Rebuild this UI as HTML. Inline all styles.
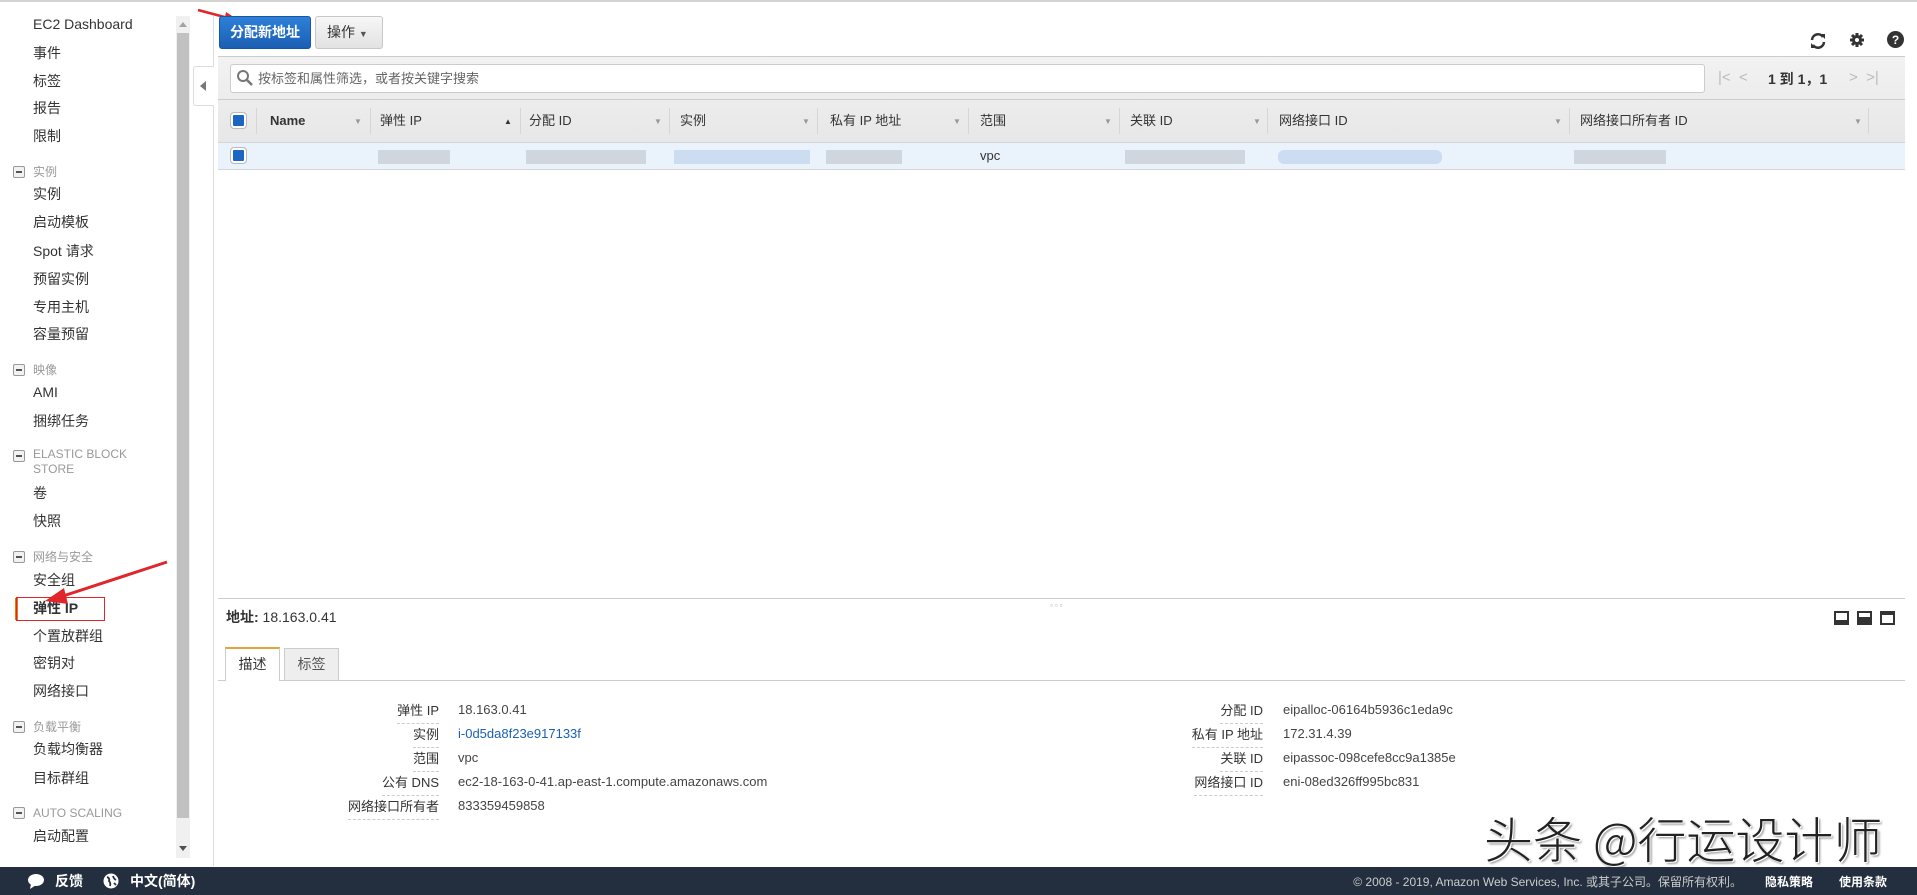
<!DOCTYPE html>
<html><head><meta charset="utf-8">
<style>
*{margin:0;padding:0;box-sizing:border-box}
body{width:1917px;height:895px;position:relative;overflow:hidden;background:#fff;font-family:"Liberation Sans","Noto Sans CJK SC",sans-serif;font-size:14px;color:#333}
.a{position:absolute;white-space:nowrap;line-height:18px}
.nav{left:33px;font-size:14px;color:#333}
.sec{left:33px;font-size:12px;color:#999}
.sec i{position:absolute;left:-20px;top:3px;width:12px;height:12px;border:1px solid #999;border-radius:2px;background:#f2f2f2}
.sec i:after{content:"";position:absolute;left:2px;top:4px;width:6px;height:2px;background:#555}
.hd{font-size:13px;color:#333;top:112px}
.sep{position:absolute;top:108px;width:1px;height:26px;background:#d5d5d5}
.dd{position:absolute;top:117px;font-size:8px;color:#999}
.blur{position:absolute;height:14px;top:150px;background:#c9ced6;opacity:.8}
.lab{font-size:13px;color:#333;text-align:right;border-bottom:1px dashed #ccc;padding-bottom:3px}
.val{font-size:13px;color:#444}
</style></head><body>
<div style="position:absolute;left:0;top:0;width:1917px;height:2px;background:#d4d4d4"></div>
<div class="a nav" style="top:15px">EC2 Dashboard</div>
<div class="a nav" style="top:44px">事件</div>
<div class="a nav" style="top:72px">标签</div>
<div class="a nav" style="top:99px">报告</div>
<div class="a nav" style="top:127px">限制</div>
<div class="a sec" style="top:163px"><i></i>实例</div>
<div class="a nav" style="top:185px">实例</div>
<div class="a nav" style="top:213px">启动模板</div>
<div class="a nav" style="top:242px">Spot 请求</div>
<div class="a nav" style="top:270px">预留实例</div>
<div class="a nav" style="top:298px">专用主机</div>
<div class="a nav" style="top:325px">容量预留</div>
<div class="a sec" style="top:361px"><i></i>映像</div>
<div class="a nav" style="top:383px">AMI</div>
<div class="a nav" style="top:412px">捆绑任务</div>
<div class="a sec" style="top:447px;line-height:15px"><i></i>ELASTIC BLOCK<br>STORE</div>
<div class="a nav" style="top:484px">卷</div>
<div class="a nav" style="top:512px">快照</div>
<div class="a sec" style="top:548px"><i></i>网络与安全</div>
<div class="a nav" style="top:571px">安全组</div>
<div style="position:absolute;left:15px;top:598px;width:3px;height:22px;background:#e47911"></div>
<div class="a nav" style="top:599px;font-weight:bold">弹性 IP</div>
<div style="position:absolute;left:16px;top:597px;width:89px;height:24px;border:1px solid #e0252b"></div>
<div class="a nav" style="top:627px">个置放群组</div>
<div class="a nav" style="top:654px">密钥对</div>
<div class="a nav" style="top:682px">网络接口</div>
<div class="a sec" style="top:718px"><i></i>负载平衡</div>
<div class="a nav" style="top:740px">负载均衡器</div>
<div class="a nav" style="top:769px">目标群组</div>
<div class="a sec" style="top:804px"><i></i>AUTO SCALING</div>
<div class="a nav" style="top:827px">启动配置</div>
<div style="position:absolute;left:176px;top:16px;width:14px;height:842px;background:#f0f0f0"></div>
<div style="position:absolute;left:177px;top:33px;width:12px;height:785px;background:#c1c1c1"></div>
<div style="position:absolute;left:179px;top:22px;border:4px solid transparent;border-bottom:5px solid #a3a3a3;border-top:0"></div>
<div style="position:absolute;left:179px;top:846px;border:4px solid transparent;border-top:5px solid #505050;border-bottom:0"></div>
<div style="position:absolute;left:213px;top:16px;width:1px;height:850px;background:#ddd"></div>
<div style="position:absolute;left:193px;top:66px;width:21px;height:40px;background:#fff;border:1px solid #ddd;border-right:0;border-radius:3px 0 0 3px"></div>
<div style="position:absolute;left:200px;top:81px;border:5px solid transparent;border-right:6px solid #777;border-left:0"></div>
<svg style="position:absolute;left:0;top:0" width="1917" height="895">
<path d="M198 10 L232 19" stroke="#e0252b" stroke-width="2.5"/><path d="M243 23 L226 12 L224 22 Z" fill="#e0252b"/>
<path d="M167 562 L60 597" stroke="#e0252b" stroke-width="3"/><path d="M45 601 L64 588 L68 604 Z" fill="#e0252b"/>
</svg>
<div style="position:absolute;left:219px;top:16px;width:92px;height:33px;background:linear-gradient(#2e80d8,#1a5fb4);border:1px solid #1557a0;border-radius:3px;color:#fff;font-weight:bold;font-size:14px;line-height:31px;text-align:center">分配新地址</div>
<div style="position:absolute;left:315px;top:16px;width:68px;height:33px;background:linear-gradient(#f7f7f7,#e2e2e2);border:1px solid #c8c8c8;border-radius:3px;color:#333;font-size:14px;line-height:31px;padding-left:11px">操作 <span style="font-size:9px;color:#555">&#9660;</span></div>
<svg style="position:absolute;left:1808px;top:31px" width="20" height="20" viewBox="0 0 20 20"><path d="M4 9 A6 6 0 0 1 15 6" stroke="#333" stroke-width="2.5" fill="none"/><path d="M16 11 A6 6 0 0 1 5 14" stroke="#333" stroke-width="2.5" fill="none"/><path d="M12 3 L17 8 L17 3Z M8 17 L3 12 L3 17Z" fill="#333"/></svg>
<svg style="position:absolute;left:1849px;top:32px" width="16" height="16" viewBox="0 0 16 16"><circle cx="8" cy="8" r="5" fill="#333"/><g stroke="#333" stroke-width="3"><path d="M8 1v14M1 8h14M3 3l10 10M13 3L3 13"/></g><circle cx="8" cy="8" r="2" fill="#fff"/></svg>
<svg style="position:absolute;left:1887px;top:31px" width="17" height="17" viewBox="0 0 17 17"><circle cx="8.5" cy="8.5" r="8.5" fill="#333"/><text x="8.5" y="13" text-anchor="middle" font-family="Liberation Sans" font-weight="bold" font-size="12" fill="#fff">?</text></svg>
<div style="position:absolute;left:218px;top:56px;width:1687px;height:86px;background:linear-gradient(#f2f2f2,#e7e7e7);border-top:1px solid #ccc"></div>
<div style="position:absolute;left:230px;top:64px;width:1475px;height:29px;background:#fff;border:1px solid #ccc;border-radius:3px"></div>
<svg style="position:absolute;left:236px;top:69px" width="18" height="18" viewBox="0 0 18 18"><circle cx="7" cy="7" r="5" stroke="#777" stroke-width="2" fill="none"/><path d="M11 11 L16 16" stroke="#777" stroke-width="2.5"/></svg>
<div class="a" style="left:258px;top:70px;font-size:13px;color:#666">按标签和属性筛选，或者按关键字搜索</div>
<div class="a" style="left:1718px;top:69px;font-size:15px;color:#bbb">|&lt; &nbsp;&lt;</div>
<div class="a" style="left:1768px;top:70px;font-size:14px;color:#333;font-weight:bold">1 到 1，1</div>
<div class="a" style="left:1849px;top:69px;font-size:15px;color:#bbb">&gt; &nbsp;&gt;|</div>
<div style="position:absolute;left:218px;top:99px;width:1687px;height:1px;background:#ccc"></div>
<div style="position:absolute;left:231px;top:113px;width:15px;height:15px;background:#1a66c2;border:2px solid #fff;outline:1px solid #bbb;border-radius:3px"></div>
<div class="sep" style="left:256px"></div>
<div class="a hd" style="left:270px;font-weight:bold">Name</div>
<div class="dd" style="left:354px">&#9660;</div><div class="sep" style="left:370px"></div>
<div class="a hd" style="left:380px">弹性 IP</div>
<div class="dd" style="left:504px;color:#333">&#9650;</div><div class="sep" style="left:520px"></div>
<div class="a hd" style="left:529px">分配 ID</div>
<div class="dd" style="left:654px">&#9660;</div><div class="sep" style="left:669px"></div>
<div class="a hd" style="left:680px">实例</div>
<div class="dd" style="left:802px">&#9660;</div><div class="sep" style="left:817px"></div>
<div class="a hd" style="left:830px">私有 IP 地址</div>
<div class="dd" style="left:953px">&#9660;</div><div class="sep" style="left:968px"></div>
<div class="a hd" style="left:980px">范围</div>
<div class="dd" style="left:1104px">&#9660;</div><div class="sep" style="left:1119px"></div>
<div class="a hd" style="left:1130px">关联 ID</div>
<div class="dd" style="left:1253px">&#9660;</div><div class="sep" style="left:1267px"></div>
<div class="a hd" style="left:1279px">网络接口 ID</div>
<div class="dd" style="left:1554px">&#9660;</div><div class="sep" style="left:1569px"></div>
<div class="a hd" style="left:1580px">网络接口所有者 ID</div>
<div class="dd" style="left:1854px">&#9660;</div><div class="sep" style="left:1868px"></div>
<div style="position:absolute;left:218px;top:142px;width:1687px;height:28px;background:#eaf2fc;border-top:1px solid #d5d5d5;border-bottom:1px solid #d5d5d5"></div>
<div style="position:absolute;left:231px;top:148px;width:15px;height:15px;background:#1a66c2;border:2px solid #fff;outline:1px solid #bbb;border-radius:3px"></div>
<div class="blur" style="left:378px;width:72px"></div>
<div class="blur" style="left:526px;width:120px"></div>
<div class="blur" style="left:674px;width:136px;background:#c4d6ee"></div>
<div class="blur" style="left:826px;width:76px"></div>
<div class="a" style="left:980px;top:147px;font-size:13px;color:#333">vpc</div>
<div class="blur" style="left:1125px;width:120px"></div>
<div class="blur" style="left:1278px;width:164px;background:#c4d6ee;border-radius:6px"></div>
<div class="blur" style="left:1574px;width:92px"></div>
<div style="position:absolute;left:218px;top:598px;width:1687px;height:1px;background:#ccc"></div>
<div class="a" style="left:1050px;top:597px;font-size:8px;color:#aaa;letter-spacing:2px">▫▫▫</div>
<div class="a" style="left:226px;top:608px;font-size:14px"><b>地址:</b> 18.163.0.41</div>
<div style="position:absolute;left:1834px;top:611px;width:15px;height:14px;background:#333"><div style="margin:2px;height:7px;background:#fff"></div></div>
<div style="position:absolute;left:1857px;top:611px;width:15px;height:14px;background:#333"><div style="margin:2px;height:4px;background:#fff"></div></div>
<div style="position:absolute;left:1880px;top:611px;width:15px;height:14px;background:#333"><div style="margin:2px;margin-top:4px;height:8px;background:#fff"></div></div>
<div style="position:absolute;left:218px;top:680px;width:1687px;height:1px;background:#ccc"></div>
<div style="position:absolute;left:225px;top:647px;width:55px;height:34px;background:#fff;border:1px solid #ccc;border-top:2px solid #e9a23b;border-bottom:0;font-size:14px;line-height:30px;text-align:center">描述</div>
<div style="position:absolute;left:284px;top:648px;width:55px;height:32px;background:#eee;border:1px solid #ccc;border-bottom:0;font-size:14px;line-height:30px;text-align:center;color:#555">标签</div>
<div class="a lab" style="right:1478px;top:702px">弹性 IP</div><div class="a val" style="left:458px;top:701px">18.163.0.41</div>
<div class="a lab" style="right:1478px;top:726px">实例</div><div class="a val" style="left:458px;top:725px;color:#1a5fb4">i-0d5da8f23e917133f</div>
<div class="a lab" style="right:1478px;top:750px">范围</div><div class="a val" style="left:458px;top:749px">vpc</div>
<div class="a lab" style="right:1478px;top:774px">公有 DNS</div><div class="a val" style="left:458px;top:773px">ec2-18-163-0-41.ap-east-1.compute.amazonaws.com</div>
<div class="a lab" style="right:1478px;top:798px">网络接口所有者</div><div class="a val" style="left:458px;top:797px">833359459858</div>
<div class="a lab" style="right:654px;top:702px">分配 ID</div><div class="a val" style="left:1283px;top:701px">eipalloc-06164b5936c1eda9c</div>
<div class="a lab" style="right:654px;top:726px">私有 IP 地址</div><div class="a val" style="left:1283px;top:725px">172.31.4.39</div>
<div class="a lab" style="right:654px;top:750px">关联 ID</div><div class="a val" style="left:1283px;top:749px">eipassoc-098cefe8cc9a1385e</div>
<div class="a lab" style="right:654px;top:774px">网络接口 ID</div><div class="a val" style="left:1283px;top:773px">eni-08ed326ff995bc831</div>
<div class="a" style="left:1484px;top:810px;font-size:49px;line-height:56px;color:#222;text-shadow:-1px -1px 0 #fff,1px 1px 0 #fff,2px 2px 2px #888;font-family:'Noto Sans CJK SC',sans-serif;font-weight:300">头条 @行运设计师</div>
<div style="position:absolute;left:0;top:867px;width:1917px;height:28px;background:#232f3e"></div>
<svg style="position:absolute;left:27px;top:873px" width="18" height="16" viewBox="0 0 18 16"><ellipse cx="9" cy="7" rx="8" ry="6" fill="#fff"/><path d="M4 11 L3 16 L9 12Z" fill="#fff"/></svg>
<div class="a" style="left:55px;top:872px;color:#fff;font-weight:bold;font-size:14px">反馈</div>
<svg style="position:absolute;left:103px;top:873px" width="16" height="16" viewBox="0 0 16 16"><circle cx="8" cy="8" r="7.5" fill="#fff"/><path d="M4 4 Q7 5 6 8 Q8 10 7 13 M10 3 Q11 6 13 7 M11 10 L13 12" stroke="#232f3e" stroke-width="1.8" fill="none"/></svg>
<div class="a" style="left:130px;top:872px;color:#fff;font-weight:bold;font-size:14px">中文(简体)</div>
<div class="a" style="right:175px;top:873px;color:#ccc;font-size:12px">© 2008 - 2019, Amazon Web Services, Inc. 或其子公司。保留所有权利。</div>
<div class="a" style="left:1765px;top:873px;color:#fff;font-size:12px;font-weight:bold">隐私策略</div>
<div class="a" style="left:1839px;top:873px;color:#fff;font-size:12px;font-weight:bold">使用条款</div>
</body></html>
